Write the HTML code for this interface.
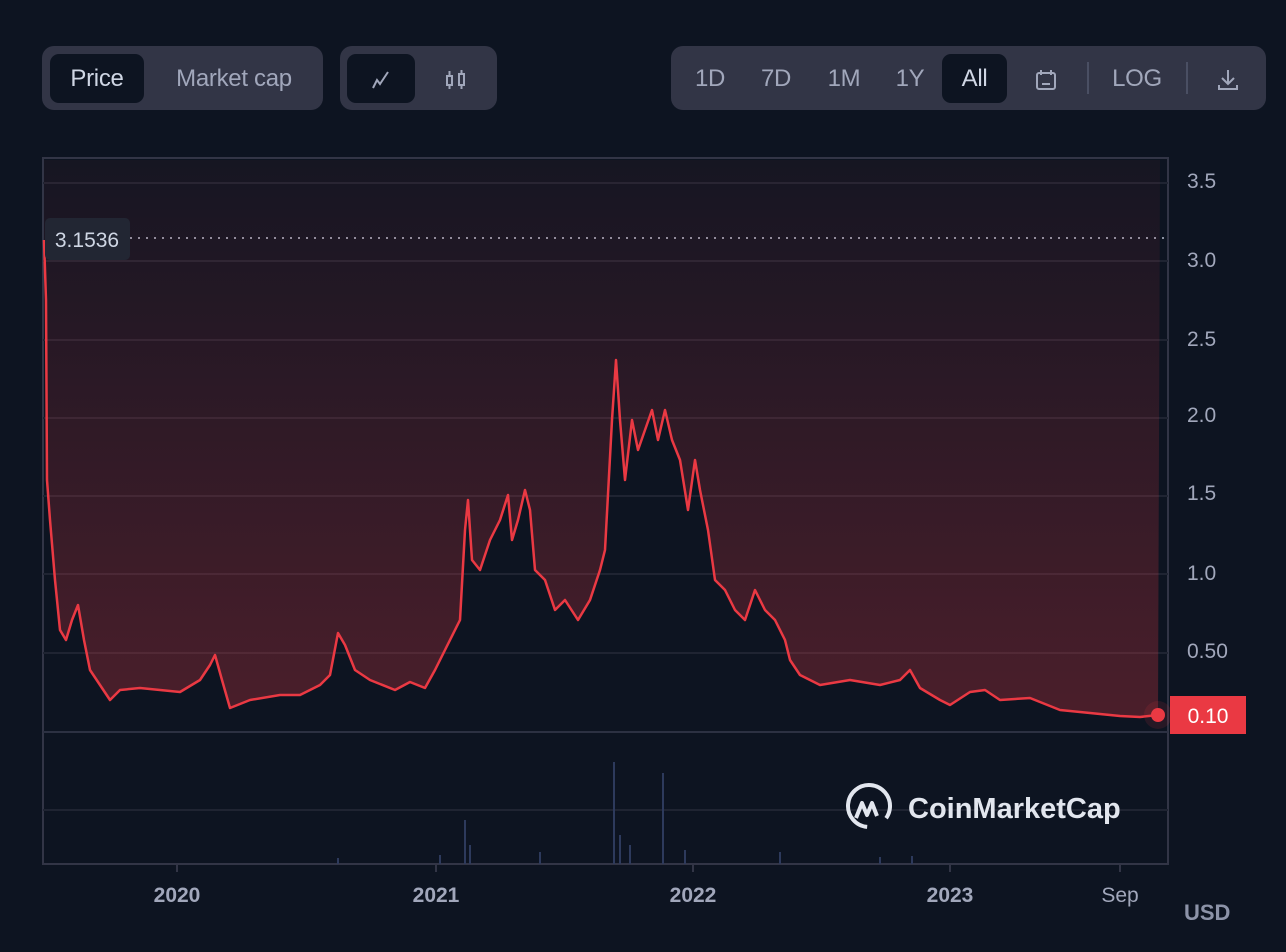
<!DOCTYPE html>
<html><head><style>
body{margin:0;width:1286px;height:952px;background:#0d1421;font-family:"Liberation Sans",sans-serif;position:relative;overflow:hidden}
.g{position:absolute;top:46px;height:64px;background:#323546;border-radius:12px}
.b{position:absolute;top:8px;height:49px;line-height:49px;color:#a1a7bb;font-size:24px;text-align:center;letter-spacing:-0.3px}
.a{background:#0d1421;border-radius:9px;color:#cfd6e4}
.yl{position:absolute;left:1187px;color:#a1a7bb;font-size:21px}
.xl{position:absolute;top:884px;color:#a1a7bb;font-size:21px;font-weight:bold;transform:translateX(-50%)}
</style></head><body>
<div class="g" style="left:42px;width:281px">
<div class="b a" style="left:8px;width:94px">Price</div>
<div class="b" style="left:112px;width:160px">Market cap</div></div>
<div class="g" style="left:340px;width:157px">
<div class="b a" style="left:7px;width:68px"><svg width="24" height="24" viewBox="0 0 24 24" style="vertical-align:middle"><path d="M4 20l4-8 3 4 8-12" fill="none" stroke="#a1a7bb" stroke-width="2"/></svg></div>
<div class="b" style="left:88px;width:55px"><svg width="28" height="28" viewBox="0 0 28 28" style="vertical-align:middle"><g fill="none" stroke="#a1a7bb" stroke-width="2"><rect x="5" y="10" width="5" height="9"/><rect x="17" y="8" width="5" height="11"/><path d="M7.5 5v5M7.5 19v4M19.5 4v4M19.5 19v4"/></g></svg></div></div>
<div class="g" style="left:671px;width:595px">
<div class="b" style="left:14px;width:50px">1D</div>
<div class="b" style="left:80px;width:50px">7D</div>
<div class="b" style="left:148px;width:50px">1M</div>
<div class="b" style="left:214px;width:50px">1Y</div>
<div class="b a" style="left:271px;width:65px">All</div>
<div class="b" style="left:355px;width:40px"><svg width="26" height="26" viewBox="0 0 26 26" style="vertical-align:middle"><g fill="none" stroke="#a1a7bb" stroke-width="2"><rect x="4" y="6" width="18" height="16" rx="2"/><path d="M8 3v5M18 3v5M9 17h8"/></g></svg></div>
<div style="position:absolute;left:416px;top:16px;width:2px;height:32px;background:#4a4f63"></div>
<div class="b" style="left:436px;width:60px">LOG</div>
<div style="position:absolute;left:515px;top:16px;width:2px;height:32px;background:#4a4f63"></div>
<div class="b" style="left:535px;width:44px"><svg width="26" height="26" viewBox="0 0 26 26" style="vertical-align:middle"><g fill="none" stroke="#a1a7bb" stroke-width="2"><path d="M13 3v13M7 11l6 6 6-6M4 18v4h18v-4"/></g></svg></div></div>

<svg style="position:absolute;left:0;top:0" width="1286" height="952">
<defs><linearGradient id="f" x1="0" y1="0" x2="0" y2="1"><stop offset="0" stop-color="#ea3943" stop-opacity="0.04"/><stop offset="1" stop-color="#ea3943" stop-opacity="0.28"/></linearGradient></defs>
<rect x="43" y="158" width="1125" height="706" fill="none" stroke="#323546" stroke-width="2"/>
<g stroke="#1f2432" stroke-width="2">
<path d="M43 183H1168M43 261H1168M43 340H1168M43 418H1168M43 496H1168M43 574H1168M43 653H1168M43 810H1168"/></g>
<path d="M43 732H1168" stroke="#2c3142" stroke-width="2"/>
<path d="M130 238H1168" stroke="#8c93a3" stroke-width="2" stroke-dasharray="2 6"/>
<g stroke="#2d3a5c" stroke-width="2">
<path d="M465 864V820M614 864V762M663 864V773M440 864V855M470 864V845M620 864V835M630 864V845M685 864V850M540 864V852M338 864V858M780 864V852M912 864V856M880 864V857"/></g>
<path d="M44,240 L46,300 47,480 50,520 55,580 60,630 66,640 72,620 78,605 84,640 90,670 100,685 110,700 120,690 140,688 160,690 180,692 200,680 210,665 215,655 222,680 230,708 250,700 280,695 300,695 320,685 330,675 338,633 345,645 355,670 370,680 395,690 410,682 425,688 435,670 445,650 460,620 465,530 468,500 472,560 480,570 490,540 500,520 508,495 512,540 518,520 525,490 530,510 535,570 545,580 555,610 565,600 578,620 590,600 600,570 605,550 612,420 616,360 620,420 625,480 632,420 638,450 645,430 652,410 658,440 665,410 672,440 680,460 688,510 695,460 700,490 708,530 715,580 725,590 735,610 745,620 755,590 765,610 775,620 785,640 790,660 800,675 820,685 850,680 880,685 900,680 910,670 920,688 940,700 950,705 970,692 985,690 1000,700 1030,698 1060,710 1090,713 1120,716 1140,717 1158,715 L1160,160 44,160Z" fill="url(#f)"/>
<path d="M44,240 L46,300 47,480 50,520 55,580 60,630 66,640 72,620 78,605 84,640 90,670 100,685 110,700 120,690 140,688 160,690 180,692 200,680 210,665 215,655 222,680 230,708 250,700 280,695 300,695 320,685 330,675 338,633 345,645 355,670 370,680 395,690 410,682 425,688 435,670 445,650 460,620 465,530 468,500 472,560 480,570 490,540 500,520 508,495 512,540 518,520 525,490 530,510 535,570 545,580 555,610 565,600 578,620 590,600 600,570 605,550 612,420 616,360 620,420 625,480 632,420 638,450 645,430 652,410 658,440 665,410 672,440 680,460 688,510 695,460 700,490 708,530 715,580 725,590 735,610 745,620 755,590 765,610 775,620 785,640 790,660 800,675 820,685 850,680 880,685 900,680 910,670 920,688 940,700 950,705 970,692 985,690 1000,700 1030,698 1060,710 1090,713 1120,716 1140,717 1158,715" fill="none" stroke="#ea3943" stroke-width="2.5" stroke-linejoin="round"/>
<circle cx="1158" cy="715" r="14" fill="#ea3943" opacity="0.12"/>
<circle cx="1158" cy="715" r="7" fill="#ea3943"/>
<rect x="45" y="218" width="85" height="42" rx="5" fill="#222633"/>
<text x="87" y="247" fill="#cfd6e4" font-size="21" text-anchor="middle" font-family="Liberation Sans">3.1536</text>
<rect x="1170" y="696" width="76" height="38" fill="#ea3943"/>
<text x="1208" y="723" fill="#fff" font-size="21" text-anchor="middle" font-family="Liberation Sans">0.10</text>
<g stroke="#323546" stroke-width="2"><path d="M177 864v8M436 864v8M693 864v8M950 864v8M1120 864v8"/></g>
<circle cx="869" cy="806" r="21" fill="none" stroke="#e2e6ee" stroke-width="4" stroke-dasharray="110 22" transform="rotate(95 869 806)"/>
<path d="M856 818l6-15 5 12 5-12 5 13" fill="none" stroke="#e2e6ee" stroke-width="4" stroke-linejoin="round"/>
<text x="908" y="818" fill="#e2e6ee" font-size="29" font-family="Liberation Sans" font-weight="bold">CoinMarketCap</text>
</svg>
<div class="yl" style="top:170px">3.5</div>
<div class="yl" style="top:249px">3.0</div>
<div class="yl" style="top:328px">2.5</div>
<div class="yl" style="top:404px">2.0</div>
<div class="yl" style="top:482px">1.5</div>
<div class="yl" style="top:562px">1.0</div>
<div class="yl" style="top:640px">0.50</div>
<div class="xl" style="left:177px">2020</div>
<div class="xl" style="left:436px">2021</div>
<div class="xl" style="left:693px">2022</div>
<div class="xl" style="left:950px">2023</div>
<div class="xl" style="left:1120px;font-weight:normal">Sep</div>
<div style="position:absolute;left:1184px;top:900px;color:#8c93a8;font-size:22px;font-weight:bold">USD</div>
</body></html>
